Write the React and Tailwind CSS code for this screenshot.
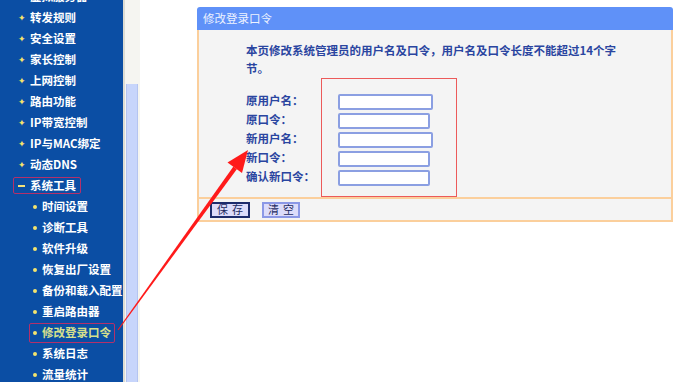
import React from 'react';

// Menu latéral du routeur
const menu = [
    { label: '虚拟服务器', level: 0 },
    { label: '转发规则', level: 0 },
    { label: '安全设置', level: 0 },
    { label: '家长控制', level: 0 },
    { label: '上网控制', level: 0 },
    { label: '路由功能', level: 0 },
    { label: 'IP带宽控制', level: 0 },
    { label: 'IP与MAC绑定', level: 0 },
    { label: '动态DNS', level: 0 },
    { label: '系统工具', level: 0, open: true },
    { label: '时间设置', level: 1 },
    { label: '诊断工具', level: 1 },
    { label: '软件升级', level: 1 },
    { label: '恢复出厂设置', level: 1 },
    { label: '备份和载入配置', level: 1 },
    { label: '重启路由器', level: 1 },
    { label: '修改登录口令', level: 1, active: true },
    { label: '系统日志', level: 1 },
    { label: '流量统计', level: 1 },
];

const fields = [
    { label: '原用户名：', w: 'w-[95px]' },
    { label: '原口令：', w: 'w-[92px]' },
    { label: '新用户名：', w: 'w-[95px]' },
    { label: '新口令：', w: 'w-[92px]' },
    { label: '确认新口令：', w: 'w-[92px]' },
];

const font = { fontFamily: '"Noto Sans CJK SC", "Liberation Sans", sans-serif' };

const MenuItem = ({ item }) => {
    if (item.level === 0) {
        return (
            <div className="h-[21px] flex items-center pl-[18px] whitespace-nowrap">
                <div
                    className={`flex items-center h-[17px] pr-[4px] ${item.open ? 'border-[1.5px] border-[#b4306a] rounded-[2px] -ml-[5px] pl-[4px]' : ''}`}
                >
                    {item.open ? (
                        <span className="w-[7px] h-[2px] bg-[#f4e27a] mr-[5px]"></span>
                    ) : (
                        <span className="text-[#f6e36c] text-[9px] leading-none w-[12px]">✦</span>
                    )}
                    <span className="text-white font-bold text-[11.5px] leading-none">{item.label}</span>
                </div>
            </div>
        );
    }
    return (
        <div className="h-[21px] flex items-center pl-[33px] whitespace-nowrap">
            <div
                className={`flex items-center h-[20px] pr-[3px] ${item.active ? 'border-[1.5px] border-[#b4306a] rounded-[2px] -ml-[4px] pl-[3px]' : ''}`}
            >
                <span className="w-[4px] h-[4px] rounded-full bg-[#f4e46e] mr-[5px] shrink-0"></span>
                <span className={`font-bold text-[11.5px] leading-none ${item.active ? 'text-[#d6e08c]' : 'text-white'}`}>
                    {item.label}
                </span>
            </div>
        </div>
    );
};

const App = () => {
    return (
        <div className="relative w-[678px] h-[382px] overflow-hidden bg-white flex" style={font}>
            {/* Menu latéral */}
            <div className="w-[123px] shrink-0 h-full bg-[#0b4ea4] overflow-hidden">
                <div className="-mt-[14px]">
                    {menu.map((item) => (
                        <MenuItem key={item.label} item={item} />
                    ))}
                </div>
            </div>

            {/* Barre de défilement */}
            <div className="w-[17px] shrink-0 h-full bg-[#f5f5f1] border-l-[2px] border-[#dcdcd4] flex pl-[1px]">
                <div className="w-[12px] mt-[84px] h-[300px] bg-[#c7d5fb] border-x border-[#b4c4f0]"></div>
            </div>

            {/* Contenu */}
            <div className="flex-1 pt-[7px] pl-[57px]">
                <div className="w-[476px]">
                    <div className="h-[23px] bg-[#5f91f8] rounded-t-[3px] flex items-center pl-[6px]">
                        <span className="text-[#eef3ff] text-[11.5px] leading-none">修改登录口令</span>
                    </div>
                    <div className="bg-[#f4f4f4] border-x-[2px] border-b-[2px] border-[#fbcf9c]">
                        <div className="pl-[47px] pt-[11px] w-[420px] text-[#2a45a0] font-bold text-[11.5px] leading-[18px]">
                            本页修改系统管理员的用户名及口令，用户名及口令长度不能超过14个字节。
                        </div>
                        <div className="flex mt-[1px]">
                            <div className="w-[122px] pl-[47px] pt-[13px]">
                                {fields.map((f) => (
                                    <div key={f.label} className="h-[19px] flex items-center text-[#2a45a0] font-bold text-[11.5px] leading-none whitespace-nowrap">
                                        {f.label}
                                    </div>
                                ))}
                            </div>
                            <div className="w-[136px] h-[119px] border border-[#ec5a5a] pl-[16px] pt-[13px]">
                                {fields.map((f) => (
                                    <div key={f.label} className="h-[19px] flex items-center">
                                        <div className={`${f.w} h-[16px] bg-white border-2 border-[#8b9fe2] rounded-[2px]`}></div>
                                    </div>
                                ))}
                            </div>
                        </div>
                        <div className="border-t-[2px] border-[#fbcf9c] h-[23px] flex items-center pl-[11px] gap-[12px]">
                            <div className="w-[40px] h-[16px] bg-[#dcdcfa] border-2 border-[#1d2c6c] flex items-center justify-center text-[#1c2a60] text-[11px] leading-none tracking-[4px] pl-[4px]">
                                保存
                            </div>
                            <div className="w-[38px] h-[16px] bg-[#dcdcfa] border-2 border-[#8b98e6] flex items-center justify-center text-[#1c2a60] text-[11px] leading-none tracking-[4px] pl-[4px]">
                                清空
                            </div>
                        </div>
                    </div>
                </div>
            </div>

            {/* Flèche rouge */}
            <svg className="absolute left-0 top-0 pointer-events-none" width="678" height="382" viewBox="0 0 678 382">
                <polygon
                    points="118.4,330.3 117.6,329.7 233.4,166.4 236.8,169.2"
                    fill="#ff1a1a"
                />
                <polygon
                    points="248,150 242,173 227.5,162.5"
                    fill="#ff1a1a"
                />
            </svg>
        </div>
    );
};

export default App;
